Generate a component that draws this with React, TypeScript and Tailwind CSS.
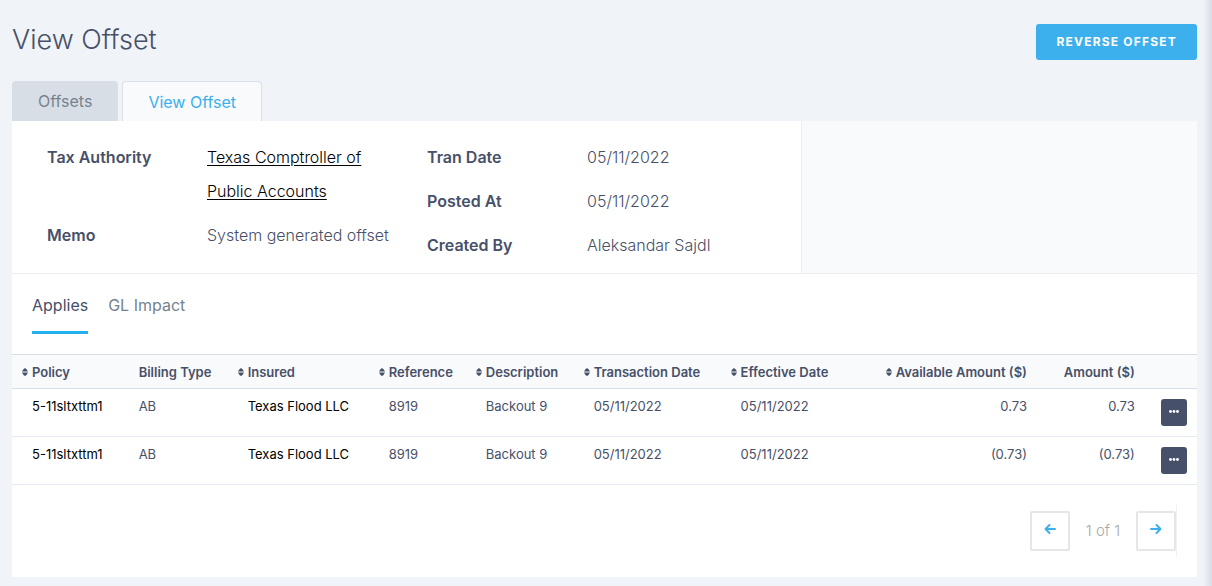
import type { ReactNode } from 'react';

type Column = { label: string; sortable?: boolean; right?: boolean; width: string };

const columns: Column[] = [
  { label: 'Policy', sortable: true, width: 'w-[9%]' },
  { label: 'Billing Type', width: 'w-[9.2%]' },
  { label: 'Insured', sortable: true, width: 'w-[11.9%]' },
  { label: 'Reference', sortable: true, width: 'w-[8.2%]' },
  { label: 'Description', sortable: true, width: 'w-[9.1%]' },
  { label: 'Transaction Date', sortable: true, width: 'w-[12.4%]' },
  { label: 'Effective Date', sortable: true, width: 'w-[10.5%]' },
  { label: 'Available Amount ($)', sortable: true, right: true, width: 'w-[16.2%]' },
  { label: 'Amount ($)', right: true, width: 'w-[9.1%]' },
];

const rows = [
  { policy: '5-11sltxttm1', amount: '0.73' },
  { policy: '5-11sltxttm1', amount: '(0.73)' },
];

function SortIcon() {
  return (
    <svg className="mr-1 h-2 w-1.5 shrink-0" viewBox="0 0 6 8" fill="currentColor" aria-hidden="true">
      <path d="M3 0 Q5 1 6 3.500H0Q1 1 3 0zM0 4.500h6Q5 7 3 8Q1 7 0 4.500z" />
    </svg>
  );
}

function Field({ label, children }: { label: string; children: ReactNode }) {
  return (
    <div className="mb-2.5 flex leading-[34px]">
      <dt className="w-40 shrink-0 font-semibold">{label}</dt>
      <dd className="font-light">{children}</dd>
    </div>
  );
}

function Arrow({ left }: { left?: boolean }) {
  return (
    <svg
      className="h-4 w-3"
      viewBox="0 0 12 16"
      fill="none"
      stroke="currentColor"
      strokeWidth="2"
      strokeLinejoin="round"
      strokeLinecap="round"
      aria-hidden="true"
    >
      <path d={left ? 'M11 6H1.5M5.500 2 1.500 6 5.500 10' : 'M1 6h9.500M6.500 2 10.500 6 6.500 10'} />
    </svg>
  );
}

export default function App() {
  return (
    <div className="flex min-h-screen bg-[#f0f3f8] font-['Inter',sans-serif] text-[16px] text-[#475069]">
      <main className="min-w-0 flex-1 pb-2 pl-3">
        <header className="flex h-20 items-start justify-between pt-6">
          <h1 className="text-[27px] font-light leading-8">View Offset</h1>
          <button className="h-9 rounded-[3px] bg-[#3bb0ec] px-5 text-[12px] font-bold tracking-widest text-white">
            REVERSE OFFSET
          </button>
        </header>

        <nav className="mt-px flex gap-1">
          <a href="#offsets" className="flex h-10 items-center rounded-t-[4px] bg-[#d7dee6] px-[26px] text-[#76838f]">
            Offsets
          </a>
          <a
            href="#view"
            className="flex h-10 items-center rounded-t-[4px] border border-b-0 border-[#dadfe8] bg-[#f9fafc] px-[25px] text-[#3bb0ec]"
          >
            View Offset
          </a>
        </nav>

        <section className="bg-white">
          <div className="flex border-b border-[#ebedf0]">
            <dl className="flex w-2/3 border-r border-[#ebedf0] pb-px pl-[35px] pt-[19px]">
              <div className="w-[380px] shrink-0 pr-6">
                <Field label="Tax Authority">
                  <a href="#authority" className="text-black underline underline-offset-2">
                    Texas Comptroller of Public Accounts
                  </a>
                </Field>
                <Field label="Memo">System generated offset</Field>
              </div>
              <div className="flex-1">
                <Field label="Tran Date">05/11/2022</Field>
                <Field label="Posted At">05/11/2022</Field>
                <Field label="Created By">Aleksandar Sajdl</Field>
              </div>
            </dl>
            <div className="flex-1 bg-[#f9fafc]" />
          </div>

          <nav className="flex gap-5 p-5">
            <a href="#applies" className="h-10 border-b-3 border-[#23b0ee] leading-[22px]">
              Applies
            </a>
            <a href="#gl" className="h-10 leading-[22px] text-[#76838f]">
              GL Impact
            </a>
          </nav>

          <table className="w-full table-fixed border-collapse text-left text-[13px] leading-5">
            <thead>
              <tr className="h-[34px] border-y border-[#d7dee6] bg-[#f9fafc]">
                {columns.map((c) => (
                  <th
                    key={c.label}
                    className={`${c.width} whitespace-nowrap p-0 font-semibold ${
                      c.right ? 'pr-2.5' : c.sortable ? 'pl-2.5' : 'pl-5'
                    }`}
                  >
                    <span className={`flex items-center ${c.right ? 'justify-end' : ''}`}>
                      {c.sortable && <SortIcon />}
                      {c.label}
                    </span>
                  </th>
                ))}
                <th className="w-[4.4%] p-0" aria-label="Actions" />
              </tr>
            </thead>
            <tbody>
              {rows.map((r) => (
                <tr key={r.amount} className="h-12 border-b border-[#e4eaef] align-top">
                  <td className="whitespace-nowrap pl-5 pt-[7px]">
                    <a href="#policy" className="text-black">{r.policy}</a>
                  </td>
                  <td className="pl-5 pt-[7px]">AB</td>
                  <td className="whitespace-nowrap pl-5 pt-[7px]">
                    <a href="#insured" className="text-black">Texas Flood LLC</a>
                  </td>
                  <td className="pl-5 pt-[7px]">8919</td>
                  <td className="whitespace-nowrap pl-5 pt-[7px]">Backout 9</td>
                  <td className="pl-5 pt-[7px]">05/11/2022</td>
                  <td className="pl-5 pt-[7px]">05/11/2022</td>
                  <td className="pr-2.5 pt-[7px] text-right">{r.amount}</td>
                  <td className="pr-2.5 pt-[7px] text-right">{r.amount}</td>
                  <td className="pr-2.5 pt-2.5">
                    <button
                      aria-label="Row actions"
                      className="ml-auto flex h-[27px] w-[26px] items-center justify-center rounded-[3px] bg-[#465069] text-white"
                    >
                      <svg className="h-1.5 w-2.5" viewBox="0 0 10 6" fill="currentColor" aria-hidden="true">
                        <circle cx="1.500" cy="1.500" r="1.400" />
                        <circle cx="5" cy="1.500" r="1.400" />
                        <circle cx="8.500" cy="1.500" r="1.400" />
                      </svg>
                    </button>
                  </td>
                </tr>
              ))}
            </tbody>
          </table>

          <div className="flex justify-end p-5">
            <div className="flex h-[52px] items-center border-r border-[#f0f0f0]">
              <button
                aria-label="Previous page"
                className="flex size-10 items-center justify-center rounded-[2px] border-2 border-[#e6e6e6] text-[#3bb0ec]"
              >
                <Arrow left />
              </button>
              <span className="w-[66px] text-center text-[15px] font-light text-[#a9a9a9]">1 of 1</span>
              <button
                aria-label="Next page"
                className="flex size-10 items-center justify-center rounded-[2px] border-2 border-[#e6e6e6] text-[#3bb0ec]"
              >
                <Arrow />
              </button>
            </div>
          </div>
        </section>
      </main>
      <div className="w-[15px] shrink-0 bg-linear-to-r from-[#f0f3f8] from-40% to-[#d9dde7]" />
    </div>
  );
}
